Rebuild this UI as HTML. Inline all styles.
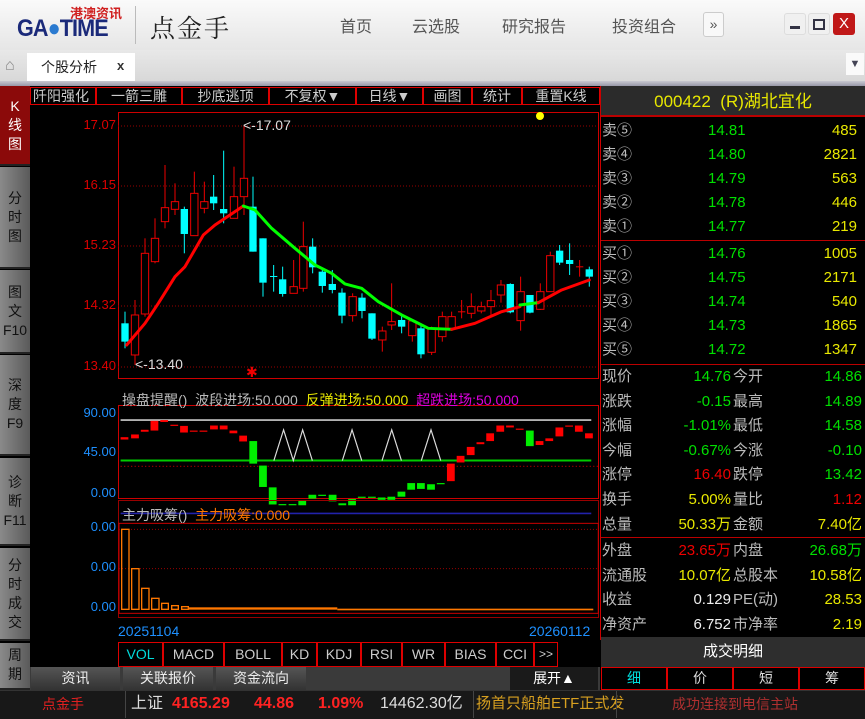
<!DOCTYPE html>
<html><head><meta charset="utf-8"><style>
*{margin:0;padding:0;box-sizing:border-box}
body{width:865px;height:719px;background:#000;font-family:"Liberation Sans","Noto Sans CJK SC",sans-serif;position:relative;overflow:hidden}
.a{position:absolute;white-space:nowrap}
.top{left:0;top:0;width:865px;height:50px;background:linear-gradient(#fafafa,#e6e6e6)}
.tab2{left:0;top:50px;width:865px;height:31px;background:linear-gradient(#e8e8e8,#d8d8d8)}
.nav{top:13px;font-size:16px;color:#555}
.side{left:0;width:30px;background:linear-gradient(90deg,#8a8a8a,#5a5a5a);color:#111;font-size:14px;text-align:center;line-height:19px;display:flex;flex-direction:column;justify-content:center;border-bottom:2px solid #222}
.tb{top:87px;height:18px;border:1px solid #d00;color:#ccc;font-size:14px;line-height:16px;text-align:center}
.yl{font-size:13px;color:#d00;text-align:right;width:88px;left:28px}
.bl{font-size:13px;color:#1e90ff;text-align:right;width:88px;left:28px}
.r{font-size:15px;line-height:24px;height:24px}
.w{color:#bbb}.g{color:#00e000}.y{color:#e8e800}.rd{color:#e00}
.ib{top:642px;height:25px;border:1px solid #d00;color:#ccc;font-size:14px;line-height:23px;text-align:center}
.gb{top:667px;height:23px;background:linear-gradient(#555,#333);color:#eee;font-size:14px;line-height:23px;text-align:center}
.rt{top:667px;height:23px;border:1px solid #d00;color:#ddd;font-size:14px;line-height:21px;text-align:center;background:#000}
.st{top:695px;line-height:18px;height:18px}
</style></head><body>
<div class="a top"></div>
<div class="a" style="left:70px;top:3px;font-size:13px;font-weight:bold;color:#d02020">港澳资讯</div>
<div class="a" style="left:17px;top:17px;font-size:24px;font-weight:bold;color:#1b2a7a;letter-spacing:-1px;transform:scaleX(0.9);transform-origin:left;line-height:24px">GA<span style="color:#2a7ad0">●</span>TIME</div>
<div class="a" style="left:135px;top:6px;width:1px;height:38px;background:#bbb"></div>
<div class="a" style="left:150px;top:9px;font-size:25px;color:#222;font-family:'Noto Serif CJK SC',serif;letter-spacing:2px">点金手</div>
<div class="a nav" style="left:340px">首页</div>
<div class="a nav" style="left:412px">云选股</div>
<div class="a nav" style="left:502px">研究报告</div>
<div class="a nav" style="left:612px">投资组合</div>
<div class="a" style="left:703px;top:12px;width:21px;height:25px;border:1px solid #ccc;border-radius:3px;background:#f8f8f8;font-size:14px;color:#555;text-align:center;line-height:23px">»</div>
<div class="a" style="left:784px;top:13px;width:22px;height:22px;border-radius:3px;background:#f0f0f0;border:1px solid #ddd"><div style="margin:12px 5px 0;height:3px;background:#334"></div></div>
<div class="a" style="left:808px;top:13px;width:22px;height:22px;border-radius:3px;background:#f0f0f0;border:1px solid #ddd"><div style="margin:5px 4px;height:11px;border:2px solid #334"></div></div>
<div class="a" style="left:833px;top:13px;width:22px;height:22px;border-radius:3px;background:#c01818;color:#fff;text-align:center;font-size:15px;line-height:21px">X</div>
<div class="a tab2"></div>
<div class="a" style="left:5px;top:58px;width:16px;height:16px;color:#888;font-size:16px;line-height:16px">&#8962;</div>
<div class="a" style="left:27px;top:53px;width:108px;height:28px;background:#fff"></div>
<div class="a" style="left:41px;top:57px;font-size:14px;color:#222">个股分析</div>
<div class="a" style="left:117px;top:58px;font-size:13px;color:#333;font-weight:bold">x</div>
<div class="a" style="left:846px;top:53px;width:18px;height:22px;background:#fafafa;color:#445;font-size:11px;text-align:center;line-height:22px">▼</div>
<div class="a" style="left:0;top:81px;width:865px;height:5px;background:linear-gradient(#c8c8d0,#9898a8)"></div>

<div class="a side" style="top:86px;height:80px;background:#8b0a0a;color:#fff">K<br>线<br>图</div>
<div class="a side" style="top:167px;height:102px">分<br>时<br>图</div>
<div class="a side" style="top:270px;height:84px">图<br>文<br>F10</div>
<div class="a side" style="top:355px;height:101px">深<br>度<br>F9</div>
<div class="a side" style="top:458px;height:88px">诊<br>断<br>F11</div>
<div class="a side" style="top:548px;height:93px">分<br>时<br>成<br>交</div>
<div class="a side" style="top:643px;height:47px;justify-content:flex-start;padding-top:3px">周<br>期</div>

<div class="a tb" style="left:30px;width:66px;text-align:right;padding-right:6px;overflow:hidden">阡阳强化</div>
<div class="a tb" style="left:96px;width:86px">一箭三雕</div>
<div class="a tb" style="left:182px;width:87px">抄底逃顶</div>
<div class="a tb" style="left:269px;width:87px">不复权▼</div>
<div class="a tb" style="left:356px;width:67px">日线▼</div>
<div class="a tb" style="left:423px;width:49px">画图</div>
<div class="a tb" style="left:472px;width:50px">统计</div>
<div class="a tb" style="left:522px;width:78px">重置K线</div>

<div class="a yl" style="top:117px">17.07</div>
<div class="a yl" style="top:177px">16.15</div>
<div class="a yl" style="top:237px">15.23</div>
<div class="a yl" style="top:297px">14.32</div>
<div class="a yl" style="top:358px">13.40</div>
<div class="a bl" style="top:405px">90.00</div>
<div class="a bl" style="top:444px">45.00</div>
<div class="a bl" style="top:485px">0.00</div>
<div class="a bl" style="top:519px">0.00</div>
<div class="a bl" style="top:559px">0.00</div>
<div class="a bl" style="top:599px">0.00</div>

<svg class="a" style="left:0;top:0" width="865" height="719">
<rect x="118.5" y="112.5" width="480" height="266" fill="none" stroke="#c00" />
<g stroke="#900" stroke-dasharray="1,2">
<line x1="118" y1="126" x2="598" y2="126"/><line x1="118" y1="186" x2="598" y2="186"/><line x1="118" y1="246" x2="598" y2="246"/><line x1="118" y1="306" x2="598" y2="306"/><line x1="118" y1="367" x2="598" y2="367"/>
</g>
<circle cx="540" cy="116" r="4" fill="#ff0"/>
<g transform="translate(115,110) scale(0.3333)" stroke-width="3">
<g>
<line x1="30" y1="605" x2="30" y2="715" stroke="#0ff"/><rect x="19" y="640" width="22" height="55" fill="#0ff"/>
<line x1="60" y1="570" x2="60" y2="765" stroke="#e00"/><rect x="49" y="615" width="22" height="120" fill="#000" stroke="#e00"/>
<line x1="90" y1="385" x2="90" y2="620" stroke="#e00"/><rect x="79" y="430" width="22" height="182" fill="#000" stroke="#e00"/>
<line x1="120" y1="325" x2="120" y2="460" stroke="#e00"/><rect x="109" y="385" width="22" height="70" fill="#000" stroke="#e00"/>
<line x1="150" y1="165" x2="150" y2="355" stroke="#e00"/><rect x="139" y="293" width="22" height="42" fill="#000" stroke="#e00"/>
<line x1="180" y1="220" x2="180" y2="315" stroke="#e00"/><rect x="169" y="275" width="22" height="23" fill="#000" stroke="#e00"/>
<line x1="208" y1="290" x2="208" y2="430" stroke="#0ff"/><rect x="197" y="297" width="22" height="75" fill="#0ff"/>
<line x1="238" y1="185" x2="238" y2="377" stroke="#e00"/><rect x="227" y="250" width="22" height="127" fill="#000" stroke="#e00"/>
<line x1="268" y1="215" x2="268" y2="310" stroke="#e00"/><rect x="257" y="275" width="22" height="20" fill="#000" stroke="#e00"/>
<line x1="296" y1="195" x2="296" y2="300" stroke="#0ff"/><rect x="285" y="260" width="22" height="20" fill="#0ff"/>
<line x1="326" y1="122" x2="326" y2="340" stroke="#0ff"/><rect x="315" y="297" width="22" height="13" fill="#0ff"/>
<line x1="357" y1="170" x2="357" y2="325" stroke="#e00"/><rect x="346" y="260" width="22" height="65" fill="#000" stroke="#e00"/>
<line x1="387" y1="45" x2="387" y2="315" stroke="#e00"/><rect x="376" y="205" width="22" height="55" fill="#000" stroke="#e00"/>
<line x1="414" y1="200" x2="414" y2="425" stroke="#0ff"/><rect x="403" y="290" width="22" height="135" fill="#0ff"/>
<line x1="444" y1="385" x2="444" y2="560" stroke="#0ff"/><rect x="433" y="385" width="22" height="133" fill="#0ff"/>
<line x1="476" y1="465" x2="476" y2="545" stroke="#0ff"/><rect x="465" y="498" width="22" height="3" fill="#0ff"/>
<line x1="503" y1="470" x2="503" y2="560" stroke="#0ff"/><rect x="492" y="508" width="22" height="44" fill="#0ff"/>
<line x1="536" y1="450" x2="536" y2="550" stroke="#e00"/><rect x="525" y="530" width="22" height="20" fill="#000" stroke="#e00"/>
<line x1="565" y1="335" x2="565" y2="545" stroke="#e00"/><rect x="554" y="410" width="22" height="125" fill="#000" stroke="#e00"/>
<line x1="593" y1="385" x2="593" y2="490" stroke="#0ff"/><rect x="582" y="410" width="22" height="62" fill="#0ff"/>
<line x1="622" y1="475" x2="622" y2="548" stroke="#0ff"/><rect x="611" y="485" width="22" height="43" fill="#0ff"/>
<line x1="652" y1="480" x2="652" y2="550" stroke="#0ff"/><rect x="641" y="522" width="22" height="18" fill="#0ff"/>
<line x1="681" y1="535" x2="681" y2="640" stroke="#0ff"/><rect x="670" y="548" width="22" height="69" fill="#0ff"/>
<line x1="713" y1="550" x2="713" y2="635" stroke="#e00"/><rect x="702" y="560" width="22" height="57" fill="#000" stroke="#e00"/>
<line x1="741" y1="550" x2="741" y2="625" stroke="#0ff"/><rect x="730" y="563" width="22" height="40" fill="#0ff"/>
<line x1="771" y1="610" x2="771" y2="690" stroke="#0ff"/><rect x="760" y="610" width="22" height="76" fill="#0ff"/>
<line x1="802" y1="650" x2="802" y2="725" stroke="#e00"/><rect x="791" y="663" width="22" height="27" fill="#000" stroke="#e00"/>
<line x1="830" y1="520" x2="830" y2="660" stroke="#e00"/><rect x="819" y="635" width="22" height="10" fill="#000" stroke="#e00"/>
<line x1="860" y1="615" x2="860" y2="670" stroke="#0ff"/><rect x="849" y="630" width="22" height="20" fill="#0ff"/>
<line x1="892" y1="630" x2="892" y2="695" stroke="#e00"/><rect x="881" y="633" width="22" height="44" fill="#000" stroke="#e00"/>
<line x1="918" y1="640" x2="918" y2="745" stroke="#0ff"/><rect x="907" y="655" width="22" height="78" fill="#0ff"/>
<line x1="950" y1="650" x2="950" y2="735" stroke="#e00"/><rect x="939" y="655" width="22" height="72" fill="#000" stroke="#e00"/>
<line x1="982" y1="605" x2="982" y2="695" stroke="#e00"/><rect x="971" y="620" width="22" height="60" fill="#000" stroke="#e00"/>
<line x1="1010" y1="605" x2="1010" y2="660" stroke="#e00"/><rect x="999" y="620" width="22" height="35" fill="#000" stroke="#e00"/>
<line x1="1040" y1="570" x2="1040" y2="625" stroke="#e00"/><rect x="1029" y="604" width="22" height="3" fill="#e00"/>
<line x1="1069" y1="550" x2="1069" y2="625" stroke="#e00"/><rect x="1058" y="590" width="22" height="20" fill="#000" stroke="#e00"/>
<line x1="1099" y1="575" x2="1099" y2="610" stroke="#e00"/><rect x="1088" y="590" width="22" height="13" fill="#000" stroke="#e00"/>
<line x1="1128" y1="540" x2="1128" y2="615" stroke="#e00"/><rect x="1117" y="572" width="22" height="18" fill="#000" stroke="#e00"/>
<line x1="1158" y1="510" x2="1158" y2="578" stroke="#e00"/><rect x="1147" y="525" width="22" height="30" fill="#000" stroke="#e00"/>
<line x1="1186" y1="520" x2="1186" y2="610" stroke="#0ff"/><rect x="1175" y="522" width="22" height="85" fill="#0ff"/>
<line x1="1217" y1="500" x2="1217" y2="662" stroke="#e00"/><rect x="1206" y="545" width="22" height="87" fill="#000" stroke="#e00"/>
<line x1="1245" y1="555" x2="1245" y2="610" stroke="#0ff"/><rect x="1234" y="555" width="22" height="53" fill="#0ff"/>
<line x1="1276" y1="520" x2="1276" y2="600" stroke="#e00"/><rect x="1265" y="545" width="22" height="53" fill="#000" stroke="#e00"/>
<line x1="1306" y1="425" x2="1306" y2="545" stroke="#e00"/><rect x="1295" y="437" width="22" height="108" fill="#000" stroke="#e00"/>
<line x1="1334" y1="405" x2="1334" y2="465" stroke="#0ff"/><rect x="1323" y="422" width="22" height="36" fill="#0ff"/>
<line x1="1364" y1="400" x2="1364" y2="495" stroke="#0ff"/><rect x="1353" y="450" width="22" height="12" fill="#0ff"/>
<line x1="1394" y1="450" x2="1394" y2="500" stroke="#e00"/><rect x="1383" y="469" width="22" height="3" fill="#e00"/>
<line x1="1423" y1="470" x2="1423" y2="530" stroke="#0ff"/><rect x="1412" y="478" width="22" height="22" fill="#0ff"/>
</g>
<g fill="none" stroke-width="9" stroke-linejoin="round" stroke-linecap="round">
<polyline stroke="#f00" points="35,705 90,640 130,580 180,500 210,470 265,375 300,345 385,288"/>
<polyline stroke="#0f0" points="385,288 420,300 470,355 540,415 600,465 650,490 690,522 740,535 790,575 860,615 900,635 940,655 1010,658"/>
<polyline stroke="#f00" points="1010,658 1080,640 1160,605 1215,590"/>
<polyline stroke="#0f0" points="1215,585 1270,578"/>
<polyline stroke="#f00" points="1270,578 1340,540 1423,510"/>
</g>
</g>
<rect x="118.5" y="405.5" width="480" height="93" fill="none" stroke="#c00"/>
<g transform="translate(0,380) scale(0.389)">
<line x1="310" y1="103" x2="1520" y2="103" stroke="#ccc" stroke-width="4"/>
<line x1="310" y1="222" x2="1540" y2="222" stroke="#900" stroke-width="3" stroke-dasharray="3,6"/>
<line x1="310" y1="207" x2="1520" y2="207" stroke="#0c0" stroke-width="5"/>
<line x1="310" y1="343" x2="1520" y2="343" stroke="#22a" stroke-width="4"/>
<g fill="#f00">
<rect x="310" y="147" width="20" height="6"/><rect x="337" y="140" width="20" height="10"/><rect x="362" y="128" width="20" height="5"/><rect x="387" y="105" width="20" height="25"/><rect x="412" y="103" width="20" height="5"/><rect x="438" y="115" width="20" height="3"/><rect x="463" y="118" width="20" height="17"/><rect x="488" y="130" width="20" height="3"/><rect x="513" y="130" width="20" height="3"/><rect x="540" y="117" width="20" height="10"/><rect x="565" y="117" width="20" height="10"/><rect x="590" y="130" width="20" height="7"/><rect x="615" y="143" width="20" height="15"/>
<rect x="1149" y="215" width="20" height="45"/><rect x="1174" y="195" width="20" height="17"/><rect x="1200" y="172" width="20" height="21"/><rect x="1225" y="160" width="20" height="5"/><rect x="1250" y="137" width="20" height="20"/><rect x="1276" y="117" width="20" height="16"/><rect x="1301" y="117" width="20" height="5"/><rect x="1326" y="125" width="20" height="3"/><rect x="1377" y="157" width="20" height="10"/><rect x="1402" y="150" width="20" height="7"/><rect x="1428" y="122" width="20" height="23"/><rect x="1453" y="117" width="20" height="3"/><rect x="1478" y="117" width="20" height="16"/><rect x="1504" y="137" width="20" height="13"/>
</g>
<g fill="#0e0">
<rect x="641" y="157" width="20" height="58"/><rect x="666" y="220" width="20" height="55"/><rect x="691" y="276" width="20" height="44"/><rect x="716" y="319" width="20" height="3"/><rect x="742" y="319" width="20" height="3"/><rect x="767" y="310" width="20" height="12"/><rect x="793" y="295" width="20" height="10"/><rect x="818" y="295" width="20" height="3"/><rect x="845" y="295" width="20" height="17"/><rect x="870" y="317" width="20" height="5"/><rect x="895" y="306" width="20" height="16"/><rect x="920" y="300" width="20" height="3"/><rect x="946" y="300" width="20" height="3"/><rect x="971" y="302" width="20" height="6"/><rect x="996" y="300" width="20" height="8"/><rect x="1022" y="287" width="20" height="13"/><rect x="1047" y="265" width="20" height="17"/><rect x="1072" y="265" width="20" height="15"/><rect x="1098" y="268" width="20" height="14"/><rect x="1123" y="265" width="20" height="3"/><rect x="1352" y="130" width="20" height="40"/>
</g>
<polyline fill="none" stroke="#ddd" stroke-width="3" points="704,207 729,128 754,207 778,128 803,207"/>
<polyline fill="none" stroke="#ddd" stroke-width="3" points="880,207 905,128 930,207"/>
<polyline fill="none" stroke="#ddd" stroke-width="3" points="982,207 1007,128 1032,207"/>
<polyline fill="none" stroke="#ddd" stroke-width="3" points="1083,207 1108,128 1133,207"/>
</g>
<rect x="118.5" y="500.5" width="480" height="117" fill="none" stroke="#900"/>
<g transform="translate(115,500) scale(0.3333)">
<rect x="12" y="70" width="1438" height="270" fill="none" stroke="#c00" stroke-width="3"/>
<g stroke="#900" stroke-width="3" stroke-dasharray="3,6"><line x1="12" y1="88" x2="1450" y2="88"/><line x1="12" y1="206" x2="1450" y2="206"/></g>
<g fill="none" stroke="#f70" stroke-width="4">
<rect x="20" y="88" width="22" height="240"/><rect x="50" y="206" width="22" height="122"/><rect x="80" y="265" width="22" height="63"/><rect x="110" y="295" width="22" height="33"/><rect x="140" y="310" width="20" height="18"/><rect x="170" y="317" width="20" height="11"/><rect x="200" y="320" width="20" height="8"/>
</g>
<rect x="222" y="322" width="445" height="7" fill="#f70"/>
<rect x="667" y="326" width="768" height="5" fill="#f70"/>
</g>
<line x1="600.5" y1="86" x2="600.5" y2="640" stroke="#c00"/>
</svg>

<div class="a" style="left:243px;top:117px;font-size:14px;color:#ddd">&lt;-17.07</div>
<div class="a" style="left:135px;top:356px;font-size:14px;color:#ddd">&lt;-13.40</div>
<div class="a" style="left:246px;top:364px;font-size:14px;color:#e00">&#10033;</div>
<div class="a" style="left:122px;top:390px;font-size:14px"><span class="w">操盘提醒()</span>&nbsp;&nbsp;<span class="w">波段进场:50.000</span>&nbsp;&nbsp;<span class="y">反弹进场:50.000</span>&nbsp;&nbsp;<span style="color:#d0d">超跌进场:50.000</span></div>
<div class="a" style="left:122px;top:505px;font-size:14px"><span class="w">主力吸筹()</span>&nbsp;&nbsp;<span style="color:#f70">主力吸筹:0.000</span></div>
<div class="a" style="left:118px;top:623px;font-size:14px;color:#1e90ff">20251104</div>
<div class="a" style="left:529px;top:623px;font-size:14px;color:#1e90ff">20260112</div>

<div class="a ib" style="left:118px;width:45px;color:#0dd">VOL</div>
<div class="a ib" style="left:163px;width:61px">MACD</div>
<div class="a ib" style="left:224px;width:58px">BOLL</div>
<div class="a ib" style="left:282px;width:35px">KD</div>
<div class="a ib" style="left:317px;width:44px">KDJ</div>
<div class="a ib" style="left:361px;width:41px">RSI</div>
<div class="a ib" style="left:402px;width:43px">WR</div>
<div class="a ib" style="left:445px;width:51px">BIAS</div>
<div class="a ib" style="left:496px;width:38px">CCI</div>
<div class="a ib" style="left:534px;width:24px;font-size:12px">&gt;&gt;</div>

<div class="a" style="left:30px;top:667px;width:570px;height:23px;background:#3a3a3a"></div>
<div class="a gb" style="left:31px;width:89px">资讯</div>
<div class="a gb" style="left:123px;width:90px">关联报价</div>
<div class="a gb" style="left:216px;width:90px">资金流向</div>
<div class="a" style="left:510px;top:667px;width:88px;height:23px;background:#1a1a1a;color:#fff;font-size:14px;line-height:23px;text-align:center">展开▲</div>

<div class="a" style="left:601px;top:86px;width:264px;height:31px;background:#2b2b2b;border-bottom:2px solid #b00;color:#e8e800;font-size:17px;line-height:31px;text-align:center">000422&nbsp;&nbsp;(R)湖北宜化</div>
<div class="a" style="left:601px;top:240px;width:264px;height:1px;background:#b00"></div>
<div class="a" style="left:601px;top:364px;width:264px;height:1px;background:#b00"></div>
<div class="a" style="left:601px;top:537px;width:264px;height:1px;background:#b00"></div>

<div class="a" style="left:602px;top:119px;width:260px">
<div class="r" style="position:relative"><span class="w">卖⑤</span><span class="a g" style="left:106px">14.81</span><span class="a y" style="right:5px">485</span></div>
<div class="r" style="position:relative"><span class="w">卖④</span><span class="a g" style="left:106px">14.80</span><span class="a y" style="right:5px">2821</span></div>
<div class="r" style="position:relative"><span class="w">卖③</span><span class="a g" style="left:106px">14.79</span><span class="a y" style="right:5px">563</span></div>
<div class="r" style="position:relative"><span class="w">卖②</span><span class="a g" style="left:106px">14.78</span><span class="a y" style="right:5px">446</span></div>
<div class="r" style="position:relative"><span class="w">卖①</span><span class="a g" style="left:106px">14.77</span><span class="a y" style="right:5px">219</span></div>
</div>
<div class="a" style="left:602px;top:242px;width:260px">
<div class="r" style="position:relative"><span class="w">买①</span><span class="a g" style="left:106px">14.76</span><span class="a y" style="right:5px">1005</span></div>
<div class="r" style="position:relative"><span class="w">买②</span><span class="a g" style="left:106px">14.75</span><span class="a y" style="right:5px">2171</span></div>
<div class="r" style="position:relative"><span class="w">买③</span><span class="a g" style="left:106px">14.74</span><span class="a y" style="right:5px">540</span></div>
<div class="r" style="position:relative"><span class="w">买④</span><span class="a g" style="left:106px">14.73</span><span class="a y" style="right:5px">1865</span></div>
<div class="r" style="position:relative"><span class="w">买⑤</span><span class="a g" style="left:106px">14.72</span><span class="a y" style="right:5px">1347</span></div>
</div>
<div class="a" style="left:602px;top:365px;width:260px;line-height:24.6px">
<div class="r" style="position:relative;height:24.6px"><span class="w">现价</span><span class="a g" style="right:131px">14.76</span><span class="a w" style="left:131px">今开</span><span class="a g" style="right:0">14.86</span></div>
<div class="r" style="position:relative;height:24.6px"><span class="w">涨跌</span><span class="a g" style="right:131px">-0.15</span><span class="a w" style="left:131px">最高</span><span class="a g" style="right:0">14.89</span></div>
<div class="r" style="position:relative;height:24.6px"><span class="w">涨幅</span><span class="a g" style="right:131px">-1.01%</span><span class="a w" style="left:131px">最低</span><span class="a g" style="right:0">14.58</span></div>
<div class="r" style="position:relative;height:24.6px"><span class="w">今幅</span><span class="a g" style="right:131px">-0.67%</span><span class="a w" style="left:131px">今涨</span><span class="a g" style="right:0">-0.10</span></div>
<div class="r" style="position:relative;height:24.6px"><span class="w">涨停</span><span class="a rd" style="right:131px">16.40</span><span class="a w" style="left:131px">跌停</span><span class="a g" style="right:0">13.42</span></div>
<div class="r" style="position:relative;height:24.6px"><span class="w">换手</span><span class="a y" style="right:131px">5.00%</span><span class="a w" style="left:131px">量比</span><span class="a rd" style="right:0">1.12</span></div>
<div class="r" style="position:relative;height:24.6px"><span class="w">总量</span><span class="a y" style="right:131px">50.33万</span><span class="a w" style="left:131px">金额</span><span class="a y" style="right:0">7.40亿</span></div>
</div>
<div class="a" style="left:602px;top:539px;width:260px">
<div class="r" style="position:relative;height:24.6px;line-height:24.6px"><span class="w">外盘</span><span class="a rd" style="right:131px">23.65万</span><span class="a w" style="left:131px">内盘</span><span class="a g" style="right:0">26.68万</span></div>
<div class="r" style="position:relative;height:24.6px;line-height:24.6px"><span class="w">流通股</span><span class="a y" style="right:131px">10.07亿</span><span class="a w" style="left:131px">总股本</span><span class="a y" style="right:0">10.58亿</span></div>
<div class="r" style="position:relative;height:24.6px;line-height:24.6px"><span class="w">收益</span><span class="a" style="right:131px;color:#eee">0.129</span><span class="a w" style="left:131px">PE(动)</span><span class="a y" style="right:0">28.53</span></div>
<div class="r" style="position:relative;height:24.6px;line-height:24.6px"><span class="w">净资产</span><span class="a" style="right:131px;color:#eee">6.752</span><span class="a w" style="left:131px">市净率</span><span class="a y" style="right:0">2.19</span></div>
</div>
<div class="a" style="left:601px;top:637px;width:264px;height:30px;background:#2e2e2e;color:#fff;font-size:15px;line-height:30px;text-align:center">成交明细</div>
<div class="a rt" style="left:601px;width:66px;color:#0dd">细</div>
<div class="a rt" style="left:667px;width:66px">价</div>
<div class="a rt" style="left:733px;width:66px">短</div>
<div class="a rt" style="left:799px;width:66px">筹</div>

<div class="a" style="left:0;top:690px;width:865px;height:29px;background:#181818;border-top:1px solid #333"></div>
<div class="a st" style="left:42px;font-size:14px;color:#e02020">点金手</div>
<div class="a" style="left:125px;top:691px;width:1px;height:27px;background:#444"></div>
<div class="a st" style="left:131px;font-size:16px;color:#ddd">上证</div>
<div class="a st" style="left:172px;font-size:16px;color:#f22;font-weight:bold">4165.29</div>
<div class="a st" style="left:254px;font-size:16px;color:#f22;font-weight:bold">44.86</div>
<div class="a st" style="left:318px;font-size:16px;color:#f22;font-weight:bold">1.09%</div>
<div class="a st" style="left:380px;font-size:16px;color:#ddd">14462.30亿</div>
<div class="a" style="left:473px;top:691px;width:1px;height:27px;background:#444"></div>
<div class="a st" style="left:476px;font-size:15px;color:#d8a020">扬首只船舶ETF正式发</div>
<div class="a" style="left:616px;top:691px;width:1px;height:27px;background:#444"></div>
<div class="a st" style="left:672px;font-size:14px;color:#b03030">成功连接到电信主站</div>
</body></html>
